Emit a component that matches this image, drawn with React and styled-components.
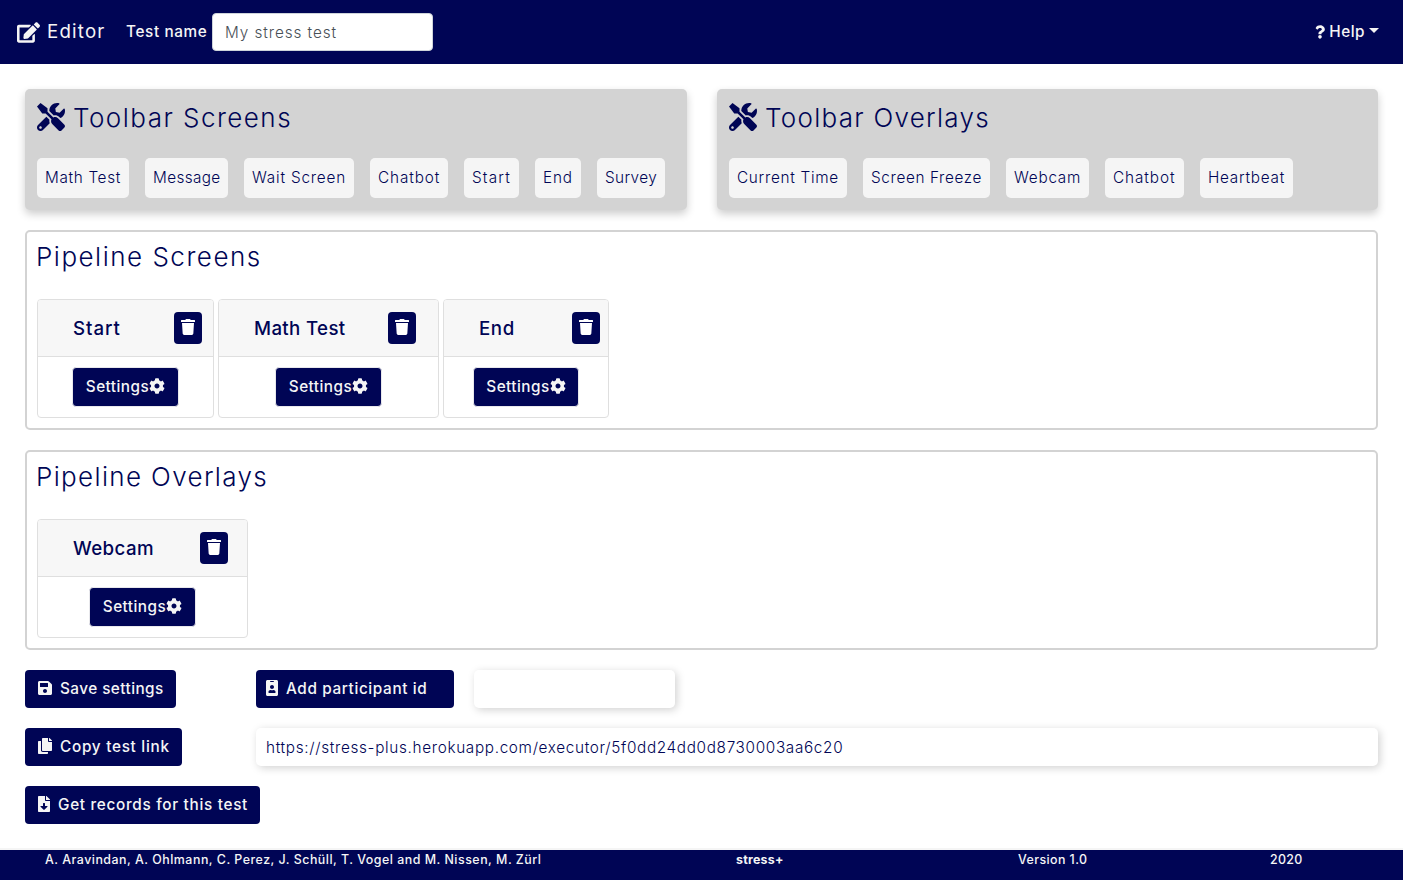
import React from 'react';
import styled, { createGlobalStyle } from 'styled-components';
import {
  FaEdit, FaTools, FaTrash, FaSave, FaIdBadge, FaCopy, FaCog, FaQuestion, FaFileDownload,
} from 'react-icons/fa';

const navy = '#000555';
const light = '#f5f5f5';

const GlobalStyle = createGlobalStyle`
  * { box-sizing: border-box; }
  body {
    margin: 0;
    background: #fff;
    color: ${navy};
    font-family: Inter, "Liberation Sans", sans-serif;
    font-size: 15.3px;
    font-weight: 300;
  }
  svg { display: block; flex: none; }
`;

const Page = styled.div`
  display: flex;
  flex-direction: column;
  height: 880px;
`;

const Text = styled.span`
  letter-spacing: ${(p) => p.$track}px;
  white-space: nowrap;
`;

const Navbar = styled.header`
  display: flex;
  align-items: center;
  height: 64px;
  padding: 0 24px 0 17px;
  background: ${navy};
  color: ${light};
  font-weight: 450;
`;

const Brand = styled.div`
  display: flex;
  align-items: center;
  gap: 7px;
  width: 109px;
  font-size: 18.7px;
  font-weight: 400;
  line-height: 24px;
`;

const NameLabel = styled.label`
  width: 86px;
  line-height: 24px;
`;

const NameInput = styled.input`
  width: 221px;
  height: 38px;
  padding: 1px 12px 0;
  border: 1px solid #ced4da;
  border-radius: 4px;
  background: #fff;
  color: #495057;
  font: inherit;
  font-weight: 300;
  letter-spacing: 0.93px;
`;

const Help = styled.div`
  display: flex;
  align-items: center;
  margin-left: auto;
  line-height: 24px;
  gap: 4px;

  svg { width: 10px; }
`;

const Caret = styled.span`
  margin-bottom: 3px;
  border-top: 5px solid ${light};
  border-left: 5px solid transparent;
  border-right: 5px solid transparent;
`;

const Main = styled.main`
  display: flex;
  flex: 1;
  flex-direction: column;
  gap: 20px;
  padding: 25px 25px 0;
`;

const Toolbars = styled.div`
  display: grid;
  grid-template-columns: 662px 661px;
  gap: 30px;
  height: 121px;
`;

const Toolbar = styled.section`
  padding: 12px;
  border-radius: 5px;
  background: #d3d3d3;
  box-shadow: 0 4px 8px rgba(0, 0, 0, 0.2);
`;

const Heading = styled.h2`
  display: flex;
  align-items: center;
  gap: 8px;
  height: 34px;
  margin: 0;
  font-size: 26px;
  font-weight: 300;
  line-height: 34px;

  svg { margin-bottom: 2px; }
`;

const Chips = styled.div`
  display: flex;
  gap: 16px;
  margin-top: 23px;
`;

const Chip = styled.div`
  width: ${(p) => p.$width}px;
  height: 40px;
  padding-left: 8px;
  border-radius: 5px;
  background: ${light};
  line-height: 40px;
`;

const Pipeline = styled.section`
  height: 200px;
  padding: 8px 10px 10px;
  border: 2px solid #d3d3d3;
  border-radius: 5px;

  ${Heading} { margin-left: -1px; }
`;

const Cards = styled.div`
  display: flex;
  gap: 4px;
  margin-top: 25px;
`;

const Card = styled.article`
  width: ${(p) => p.$width}px;
  height: 119px;
  border: 1px solid #dfdfdf;
  border-radius: 4px;
  overflow: hidden;
`;

const CardHeader = styled.div`
  display: flex;
  align-items: center;
  height: 57px;
  padding-left: 35px;
  border-bottom: 1px solid #dfdfdf;
  background: #f7f7f7;
`;

const CardTitle = styled.h3`
  width: ${(p) => p.$width}px;
  margin: 0;
  padding-top: 1px;
  font-size: 18.7px;
  font-weight: 500;
  line-height: 24px;
`;

const CardBody = styled.div`
  display: flex;
  justify-content: center;
  padding-top: 10px;
`;

const TrashButton = styled.button`
  display: flex;
  align-items: center;
  justify-content: center;
  width: 28px;
  height: 32px;
  padding: 0 0 2px;
  border: 0;
  border-radius: 4px;
  background: ${navy};
  color: #fff;
`;

const SettingsButton = styled.button`
  display: flex;
  align-items: center;
  justify-content: center;
  width: ${(p) => p.$width}px;
  height: 40px;
  padding: 0 0 2px;
  border: 1px solid #e8e8ec;
  border-radius: 4px;
  background: ${navy};
  color: ${light};
  font: inherit;
  font-weight: 450;
`;

const Actions = styled.div`
  display: grid;
  grid-template-columns: 231px 198px 202px 1fr;
  grid-auto-rows: 38px;
  row-gap: 20px;
`;

const ActionButton = styled.button`
  display: flex;
  align-items: center;
  gap: 8px;
  width: ${(p) => p.$width}px;
  height: 38px;
  padding: 0 0 1px ${(p) => p.$inset || 13}px;
  border: 0;
  border-radius: 4px;
  background: ${navy};
  color: ${light};
  font: inherit;
  font-weight: 450;

  svg { width: ${(p) => p.$icon}px; margin-bottom: 1px; }
`;

const Field = styled.div`
  height: 38px;
  padding: 1px 10px 0;
  border-radius: 5px;
  background: #fff;
  box-shadow: 2px 2px 8px rgba(0, 0, 0, 0.18);
  line-height: 38px;
`;

const ParticipantField = styled(Field)`
  margin-left: 20px;
  width: 201px;
`;

const LinkField = styled(Field)`
  grid-column: 2 / -1;
`;

const Footer = styled.footer`
  display: grid;
  grid-template-columns: 691px 282px 252px 1fr;
  height: 32px;
  padding-left: 45px;
  border-top: 2px solid ${light};
  background: ${navy};
  color: ${light};
  font-size: 12.4px;
  font-weight: 450;
  line-height: 19px;
`;

const AppName = styled(Text)`
  font-weight: 700;
`;

const screenTools = [
  ['Math Test', 92, 0.67], ['Message', 83, 0.37], ['Wait Screen', 110, 0.82],
  ['Chatbot', 78, 0.89], ['Start', 55, 1.2], ['End', 46, 0.87], ['Survey', 68, 0.4],
];
const overlayTools = [
  ['Current Time', 118, 0.72], ['Screen Freeze', 127, 0.64], ['Webcam', 83, 0.77],
  ['Chatbot', 79, 0.92], ['Heartbeat', 93, 0.75],
];
const screenCards = [
  { name: 'Start', track: 0.95, width: 177, titleWidth: 101, buttonWidth: 107 },
  { name: 'Math Test', track: 0.35, width: 221, titleWidth: 134, buttonWidth: 107 },
  { name: 'End', track: 0.6, width: 166, titleWidth: 93, buttonWidth: 106 },
];
const overlayCards = [
  { name: 'Webcam', track: 0.4, width: 211, titleWidth: 127, buttonWidth: 107 },
];

function ToolbarPanel({ title, track, tools }) {
  return (
    <Toolbar>
      <Heading><FaTools size={28} /><Text $track={track}>{title}</Text></Heading>
      <Chips>
        {tools.map(([name, width, t]) => (
          <Chip key={name} $width={width}><Text $track={t}>{name}</Text></Chip>
        ))}
      </Chips>
    </Toolbar>
  );
}

function PipelinePanel({ title, track, cards }) {
  return (
    <Pipeline>
      <Heading><Text $track={track}>{title}</Text></Heading>
      <Cards>
        {cards.map((c) => (
          <Card key={c.name} $width={c.width}>
            <CardHeader>
              <CardTitle $width={c.titleWidth}><Text $track={c.track}>{c.name}</Text></CardTitle>
              <TrashButton aria-label="Delete"><FaTrash size={16} /></TrashButton>
            </CardHeader>
            <CardBody>
              <SettingsButton $width={c.buttonWidth}>
                <Text $track={0.48}>Settings</Text><FaCog size={16} />
              </SettingsButton>
            </CardBody>
          </Card>
        ))}
      </Cards>
    </Pipeline>
  );
}

export default function App() {
  return (
    <Page>
      <GlobalStyle />
      <Navbar>
        <Brand><FaEdit size={23} /><Text $track={1.2}>Editor</Text></Brand>
        <NameLabel><Text $track={0.63}>Test name</Text></NameLabel>
        <NameInput defaultValue="My stress test" />
        <Help><FaQuestion size={16} /><Text $track={0.5}>Help</Text><Caret /></Help>
      </Navbar>
      <Main>
        <Toolbars>
          <ToolbarPanel title="Toolbar Screens" track={1.47} tools={screenTools} />
          <ToolbarPanel title="Toolbar Overlays" track={1.28} tools={overlayTools} />
        </Toolbars>
        <PipelinePanel title="Pipeline Screens" track={1.5} cards={screenCards} />
        <PipelinePanel title="Pipeline Overlays" track={1.35} cards={overlayCards} />
        <Actions>
          <ActionButton $width={151} $icon={14}><FaSave size={16} /><Text $track={0.45}>Save settings</Text></ActionButton>
          <ActionButton $width={198} $inset={10} $icon={12}><FaIdBadge size={16} /><Text $track={0.63}>Add participant id</Text></ActionButton>
          <ParticipantField />
          <span />
          <ActionButton $width={157} $icon={14}><FaCopy size={16} /><Text $track={0.73}>Copy test link</Text></ActionButton>
          <LinkField><Text $track={0.67}>https://stress-plus.herokuapp.com/executor/5f0dd24dd0d8730003aa6c20</Text></LinkField>
          <ActionButton $width={235} $icon={12}><FaFileDownload size={16} /><Text $track={0.7}>Get records for this test</Text></ActionButton>
        </Actions>
      </Main>
      <Footer>
        <Text $track={0.51}>A. Aravindan, A. Ohlmann, C. Perez, J. Schüll, T. Vogel and M. Nissen, M. Zürl</Text>
        <AppName $track={0.25}>stress+</AppName>
        <Text $track={0.42}>Version 1.0</Text>
        <Text $track={0.35}>2020</Text>
      </Footer>
    </Page>
  );
}
